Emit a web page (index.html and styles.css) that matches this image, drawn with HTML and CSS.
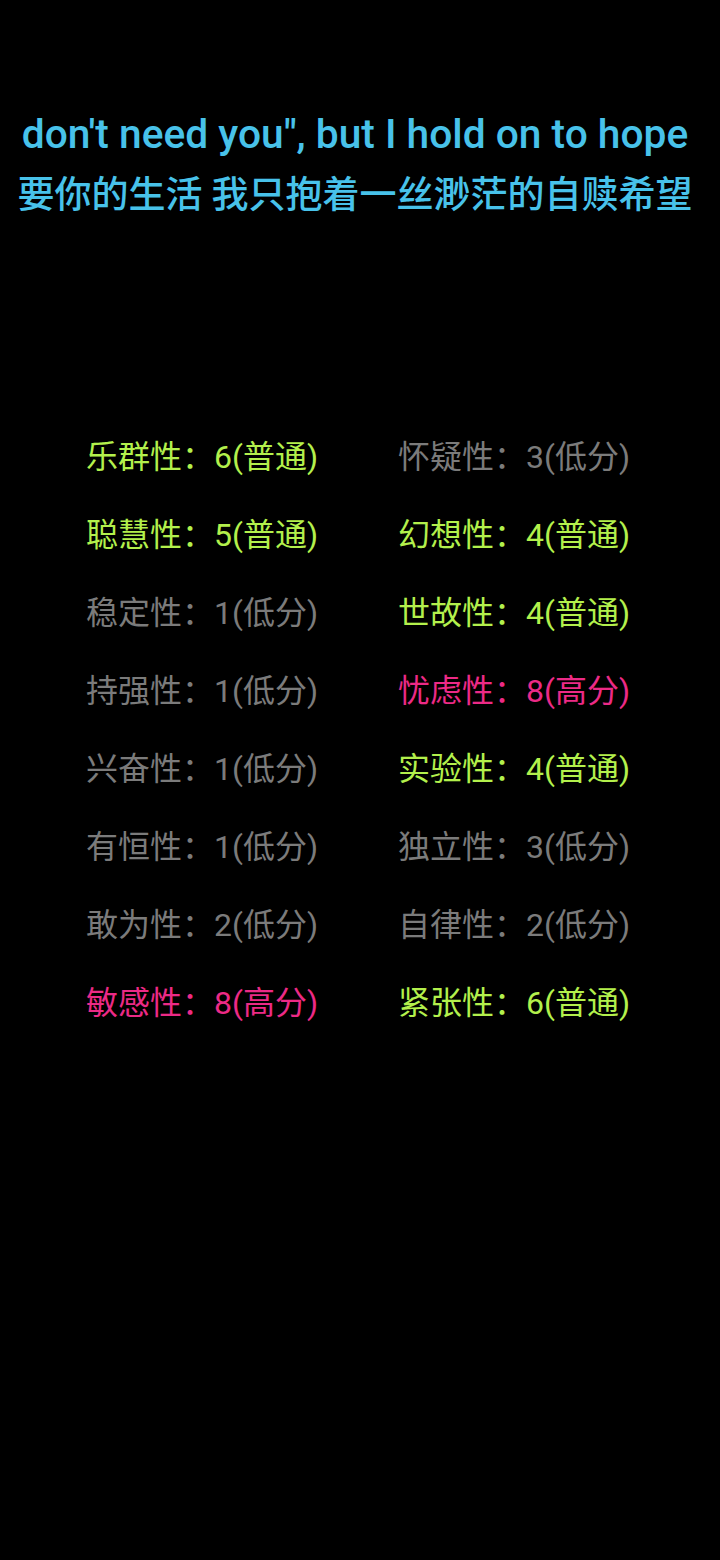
FILE: index.html
```html
<!DOCTYPE html>
<html>
<head>
<meta charset="utf-8">
<link rel="stylesheet" href="styles.css">
</head>
<body>
<div class="lyrics">
  <div class="en">don't need you", but I hold on to hope</div>
  <div class="zh">要你的生活 我只抱着一丝渺茫的自赎希望</div>
</div>
<div class="grid">
  <div class="item mid">乐群性：6(普通)</div>
  <div class="item low">怀疑性：3(低分)</div>
  <div class="item mid">聪慧性：5(普通)</div>
  <div class="item mid">幻想性：4(普通)</div>
  <div class="item low">稳定性：1(低分)</div>
  <div class="item mid">世故性：4(普通)</div>
  <div class="item low">持强性：1(低分)</div>
  <div class="item high">忧虑性：8(高分)</div>
  <div class="item low">兴奋性：1(低分)</div>
  <div class="item mid">实验性：4(普通)</div>
  <div class="item low">有恒性：1(低分)</div>
  <div class="item low">独立性：3(低分)</div>
  <div class="item low">敢为性：2(低分)</div>
  <div class="item low">自律性：2(低分)</div>
  <div class="item high">敏感性：8(高分)</div>
  <div class="item mid">紧张性：6(普通)</div>
</div>
</body>
</html>
```
FILE: styles.css
```css
html, body {
  margin: 0;
  padding: 0;
  background: #000;
}
body {
  width: 720px;
  height: 1560px;
  font-family: Roboto, "Noto Sans CJK SC", sans-serif;
}
.lyrics {
  padding-top: 108px;
  padding-right: 10px;
  display: flex;
  flex-direction: column;
  align-items: center;
  color: #48c2ea;
  font-weight: 500;
}
.en {
  font-size: 40.7px;
  line-height: 52px;
  height: 52px;
}
.zh {
  font-size: 37px;
  line-height: 52px;
  margin-top: 10px;
}
.grid {
  margin-top: 196px;
  padding-left: 86px;
  display: grid;
  grid-template-columns: 312px 312px;
  grid-auto-rows: 78px;
}
.item {
  font-size: 32px;
  line-height: 78px;
  white-space: nowrap;
}
.mid { color: #b3f04c; }
.low { color: #7b7b7b; }
.high { color: #ec2a86; }
```
